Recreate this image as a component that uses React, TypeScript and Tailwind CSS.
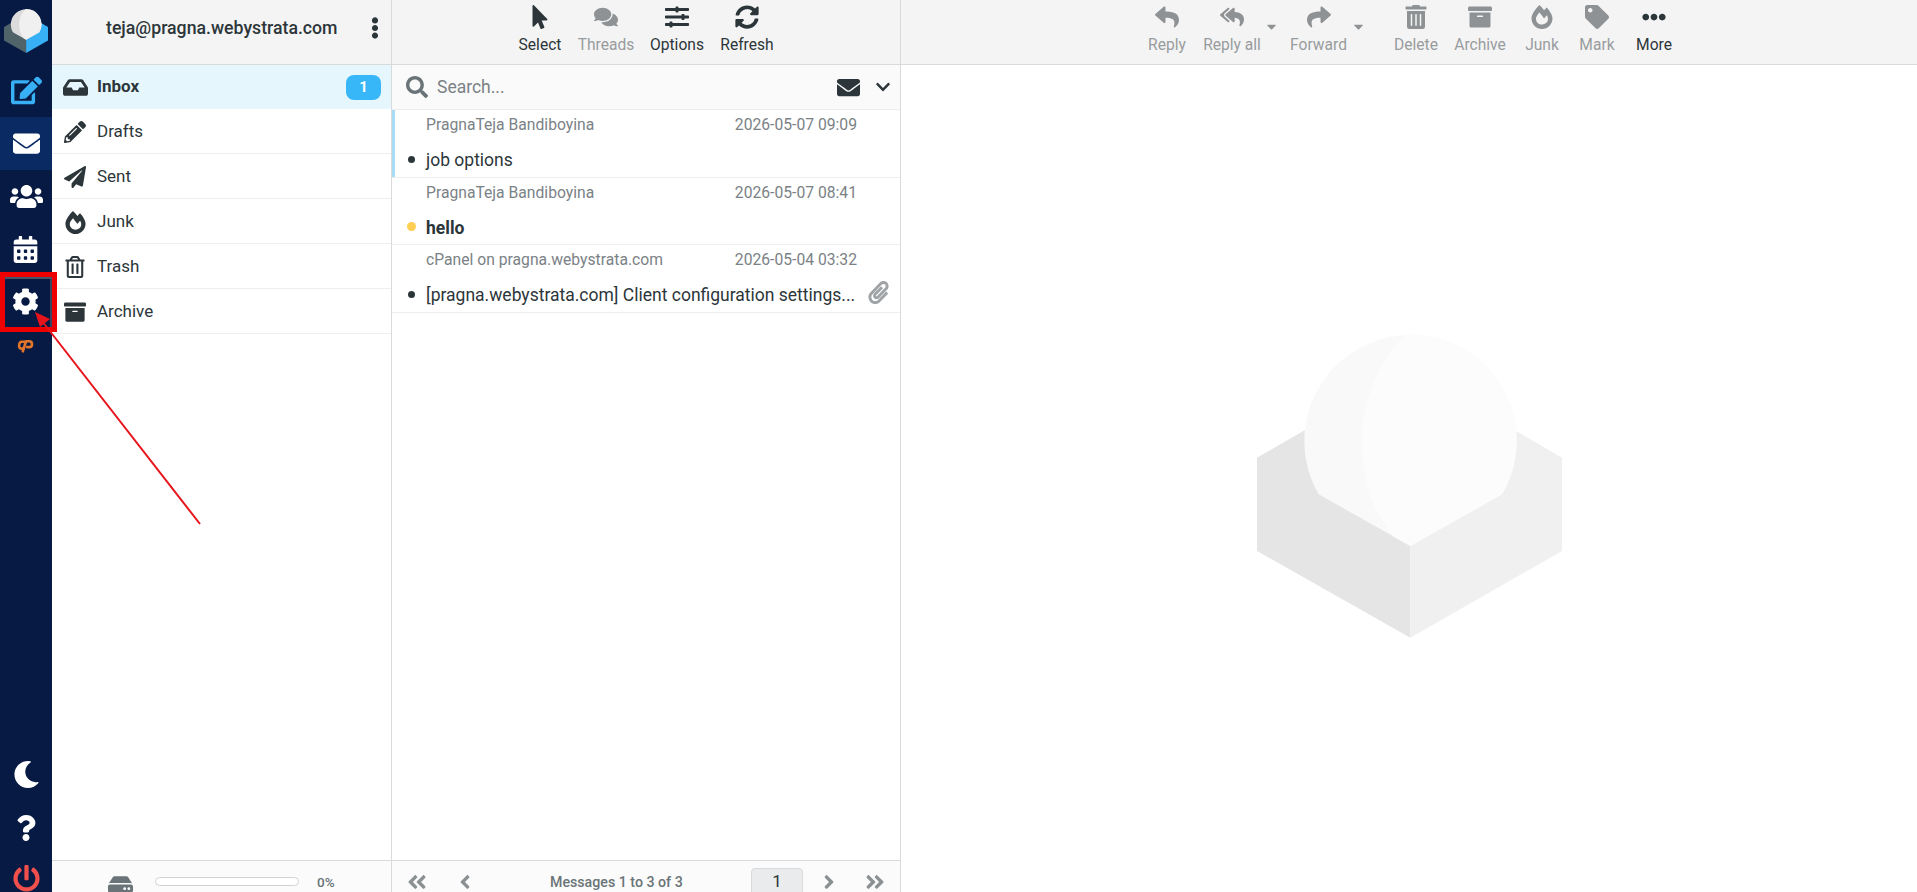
import React from "react";
import {
  FaEdit, FaEnvelope, FaUsers, FaCalendarAlt, FaCog, FaMoon, FaQuestion, FaPowerOff,
  FaInbox, FaPencilAlt, FaPaperPlane, FaFireAlt, FaRegTrashAlt, FaArchive, FaEllipsisV,
  FaMousePointer, FaComments, FaSlidersH, FaSyncAlt, FaReply, FaReplyAll, FaShare,
  FaTag, FaEllipsisH, FaSearch, FaChevronDown, FaPaperclip, FaAngleDoubleLeft,
  FaAngleDoubleRight, FaAngleLeft, FaAngleRight, FaHdd, FaCaretDown, FaTrashAlt,
} from "react-icons/fa";

function Logo({ className, left, right, s1, s2 }: { className: string; left: string; right: string; s1: string; s2: string }) {
  return (
    <svg viewBox="80 65 915 910" className={className}>
      <polygon points="80,435 540,170 540,975 80,715" fill={left} />
      <polygon points="540,170 995,435 995,715 540,975" fill={right} />
      <path d="M265,545 A318,318 0 1 1 815,545 L540,700 Z" fill={s1} />
      <path d="M530,65 Q395,200 395,380 Q395,560 490,672 L540,700 L815,545 A318,318 0 0 0 530,65 Z" fill={s2} />
    </svg>
  );
}

function CpMark() {
  return (
    <svg viewBox="0 0 32 32" className="w-[17px] h-[17px] mt-[4px] mr-[2px]" fill="none" stroke="#e0752b" strokeWidth="5" strokeLinecap="round" strokeLinejoin="round">
      <path d="M14 9 H9 C3 9 2 22 8 22 H12" />
      <path d="M11 27 L17 8 H23 C30 8 30 19 23 19 H19" />
    </svg>
  );
}

function NavIcon({ children, className = "" }: { children: React.ReactNode; className?: string }) {
  return <div className={`w-full flex justify-center shrink-0 text-white ${className}`}>{children}</div>;
}

function Folder({ icon, label, active, badge }: { icon: React.ReactNode; label: string; active?: boolean; badge?: string }) {
  return (
    <div className={`flex items-center pl-[6px] pr-[10px] shrink-0 text-[#2c363a] ${active ? "h-[44px] bg-[#e6f6fd] font-bold" : "h-[45px] pt-[2px] border-b border-[#eeeeee]"}`}>
      <span className="w-[34px] flex justify-center text-[22px]">{icon}</span>
      <span className="ml-[5px] flex-1 text-[17px]">{label}</span>
      {badge && (
        <span className="w-[35px] h-[25px] rounded-lg bg-[#37b7f7] text-white text-[15px] flex items-center justify-center">{badge}</span>
      )}
    </div>
  );
}

function Tool({ icon, label, w, dim, caret }: { icon: React.ReactNode; label: string; w: string; dim?: boolean; caret?: boolean }) {
  return (
    <div className={`relative flex flex-col items-center shrink-0 ${w} ${dim ? "text-[#999c9e]" : "text-[#2c363a]"}`}>
      <span className={`h-[33px] flex items-center text-[24px] ${dim ? "text-[#8f9294]" : ""}`}>{icon}</span>
      <span className="text-[15.6px] leading-[20px] mt-[2px] whitespace-nowrap">{label}</span>
      {caret && <FaCaretDown className="absolute right-[-10px] top-[19px] text-[15px] text-[#8f9294]" />}
    </div>
  );
}

function Message({ from, date, subject, unread, selected, clip }: { from: string; date: string; subject: string; unread?: boolean; selected?: boolean; clip?: boolean }) {
  return (
    <div className="h-[67.5px] border-b border-[#eeeeee] pl-[34px] pr-[9px] relative shrink-0">
      {selected && <span className="absolute left-0 top-0 bottom-0 w-[3px] bg-[#a8dcf5]" />}
      <div className="flex justify-between text-[15.7px] leading-[20px] pt-[5px] text-[#7b8286] pr-[34px]">
        <span>{from}</span>
        <span>{date}</span>
      </div>
      <div className="flex items-center mt-[13px] text-[17.5px] leading-[24px] text-[#2c363a]">
        <span className={`absolute rounded-full ${unread ? "w-[9px] h-[9px] bg-[#ffce54] left-[15px] bottom-[13px]" : "w-[7px] h-[7px] bg-[#2c363a] left-[16px] bottom-[14px]"}`} />
        <span className={`flex-1 whitespace-nowrap ${unread ? "font-bold" : ""}`}>{subject}</span>
        {clip && <FaPaperclip className="text-[23px] text-[#9fa3a5] mr-[1px] mt-[-5px]" />}
      </div>
    </div>
  );
}

export default function App() {
  return (
    <div className="relative flex h-[892px] w-[1917px] overflow-hidden bg-white" style={{ fontFamily: "Roboto, sans-serif" }}>
      {/* Rail */}
      <aside className="w-[52px] shrink-0 bg-[#071a44] flex flex-col">
        <NavIcon className="h-[64px] items-center">
          <Logo className="w-[44px] h-[44px] mt-[-3px]" left="#4f6368" right="#37b0f5" s1="#dcdcdc" s2="#f0f0f0" />
        </NavIcon>
        <NavIcon className="h-[53px] items-center"><FaEdit className="text-[31px] ml-[1px] text-[#37b0f5]" /></NavIcon>
        <NavIcon className="h-[53px] items-center bg-[#0a2a63]"><FaEnvelope className="text-[27px]" /></NavIcon>
        <NavIcon className="h-[53px] items-center"><FaUsers className="text-[33px]" /></NavIcon>
        <NavIcon className="h-[52px] items-center"><FaCalendarAlt className="text-[27px] mr-[2px]" /></NavIcon>
        <NavIcon className="h-[53px] items-center"><FaCog className="text-[27px] mr-[2px]" /></NavIcon>
        <NavIcon className="h-[30px] items-center"><CpMark /></NavIcon>
        <div className="flex-1" />
        <NavIcon className="h-[54px] items-center"><FaMoon className="text-[27px]" /></NavIcon>
        <NavIcon className="h-[53px] items-center"><FaQuestion className="text-[26px]" /></NavIcon>
        <NavIcon className="h-[38px] items-start pt-[11px]"><FaPowerOff className="text-[27px] text-[#f0504b]" /></NavIcon>
      </aside>

      {/* Folders */}
      <section className="w-[340px] shrink-0 border-r border-[#d8dadb] flex flex-col">
        <header className="h-[65px] shrink-0 bg-[#f4f4f4] border-b border-[#d8dadb] flex items-center pl-[54px] pr-[5px] pb-[8px]">
          <span className="flex-1 text-[17.7px] font-medium text-[#2c363a]">teja@pragna.webystrata.com</span>
          <FaEllipsisV className="text-[22px] text-[#2c363a]" />
        </header>
        <nav className="flex-1 flex flex-col">
          <Folder icon={<FaInbox className="text-[25px]" />} label="Inbox" active badge="1" />
          <Folder icon={<FaPencilAlt />} label="Drafts" />
          <Folder icon={<FaPaperPlane />} label="Sent" />
          <Folder icon={<FaFireAlt className="text-[23px]" />} label="Junk" />
          <Folder icon={<FaRegTrashAlt />} label="Trash" />
          <Folder icon={<FaArchive />} label="Archive" />
        </nav>
        <footer className="h-[32px] shrink-0 border-t border-[#d8dadb] bg-[#fbfbfb] flex items-start pt-[11px] text-[#6a7478]">
          <FaHdd className="ml-[56px] text-[25px]" />
          <div className="ml-[22px] mt-[5px] w-[144px] h-[9px] rounded-full border border-[#d0d3d4] bg-white" />
          <span className="ml-[18px] text-[13.5px] font-medium leading-[14px] mt-[3px]">0%</span>
        </footer>
      </section>

      {/* Messages */}
      <section className="w-[509px] shrink-0 border-r border-[#d8dadb] flex flex-col">
        <header className="h-[65px] shrink-0 bg-[#f4f4f4] border-b border-[#d8dadb] flex items-start pl-[118px]">
          <Tool icon={<FaMousePointer />} label="Select" w="w-[60px]" />
          <Tool icon={<FaComments />} label="Threads" w="w-[72px]" dim />
          <Tool icon={<FaSlidersH />} label="Options" w="w-[70px]" />
          <Tool icon={<FaSyncAlt />} label="Refresh" w="w-[70px]" />
        </header>
        <div className="h-[45px] shrink-0 bg-[#fafafa] border-b border-[#eeeeee] flex items-center pl-[14px] pr-[9px]">
          <FaSearch className="text-[22px] text-[#6a7478]" />
          <span className="ml-[9px] flex-1 text-[17.5px] text-[#7b8286]">Search...</span>
          <FaEnvelope className="text-[23px] text-[#2c363a]" />
          <FaChevronDown className="ml-[15px] text-[16px] text-[#2c363a]" />
        </div>
        <div className="flex-1 flex flex-col">
          <Message from="PragnaTeja Bandiboyina" date="2026-05-07 09:09" subject="job options" selected />
          <Message from="PragnaTeja Bandiboyina" date="2026-05-07 08:41" subject="hello" unread />
          <Message from="cPanel on pragna.webystrata.com" date="2026-05-04 03:32" subject="[pragna.webystrata.com] Client configuration settings..." clip />
        </div>
        <footer className="h-[32px] shrink-0 border-t border-[#d8dadb] bg-[#fbfbfb] flex items-start pt-[10px] text-[#8b9093]">
          <FaAngleDoubleLeft className="ml-[14px] text-[22px]" />
          <FaAngleLeft className="ml-[26px] text-[22px]" />
          <span className="ml-[74px] mt-[1px] text-[14.2px] font-medium text-[#6a7478] w-[201px]">Messages 1 to 3 of 3</span>
          <span className="w-[52px] h-[30px] rounded-t-[4px] bg-[#e9ebec] border border-[#d8dadb] text-[17px] text-[#2c363a] text-center mt-[-3px]">1</span>
          <FaAngleRight className="ml-[15px] text-[22px]" />
          <FaAngleDoubleRight className="ml-[24px] text-[22px]" />
        </footer>
      </section>

      {/* Content */}
      <section className="flex-1 flex flex-col min-w-0">
        <header className="h-[65px] shrink-0 bg-[#f4f4f4] border-b border-[#d8dadb] flex items-start pl-[238px]">
          <Tool icon={<FaReply />} label="Reply" w="w-[56px]" dim />
          <Tool icon={<FaReplyAll />} label="Reply all" w="w-[74px]" dim caret />
          <div className="w-[12px] shrink-0" />
          <Tool icon={<FaShare />} label="Forward" w="w-[75px]" dim caret />
          <div className="w-[32px] shrink-0" />
          <Tool icon={<FaTrashAlt />} label="Delete" w="w-[56px]" dim />
          <Tool icon={<FaArchive />} label="Archive" w="w-[72px]" dim />
          <Tool icon={<FaFireAlt />} label="Junk" w="w-[52px]" dim />
          <Tool icon={<FaTag />} label="Mark" w="w-[58px]" dim />
          <Tool icon={<FaEllipsisH />} label="More" w="w-[56px]" />
        </header>
        <div className="flex-1 flex items-center justify-center pt-[14px] bg-white">
          <Logo className="w-[305px] h-[304px]" left="#e5e5e5" right="#f0f0f0" s1="#f9f9f9" s2="#fcfcfc" />
        </div>
      </section>

      {/* Annotation */}
      <div className="absolute left-0 top-[272px] w-[57px] h-[60px] border-[5px] border-[#ee0000] shadow-[inset_0_2px_0_#4a5468,inset_-2px_0_0_#3a4560] pointer-events-none" />
      <svg className="absolute left-0 top-0 w-[260px] h-[560px] pointer-events-none" viewBox="0 0 260 560">
        <line x1="200" y1="524" x2="42" y2="321" stroke="#e8141c" strokeWidth="2" />
        <polygon points="35,312 50,319 40,327" fill="#e8141c" />
      </svg>
    </div>
  );
}
